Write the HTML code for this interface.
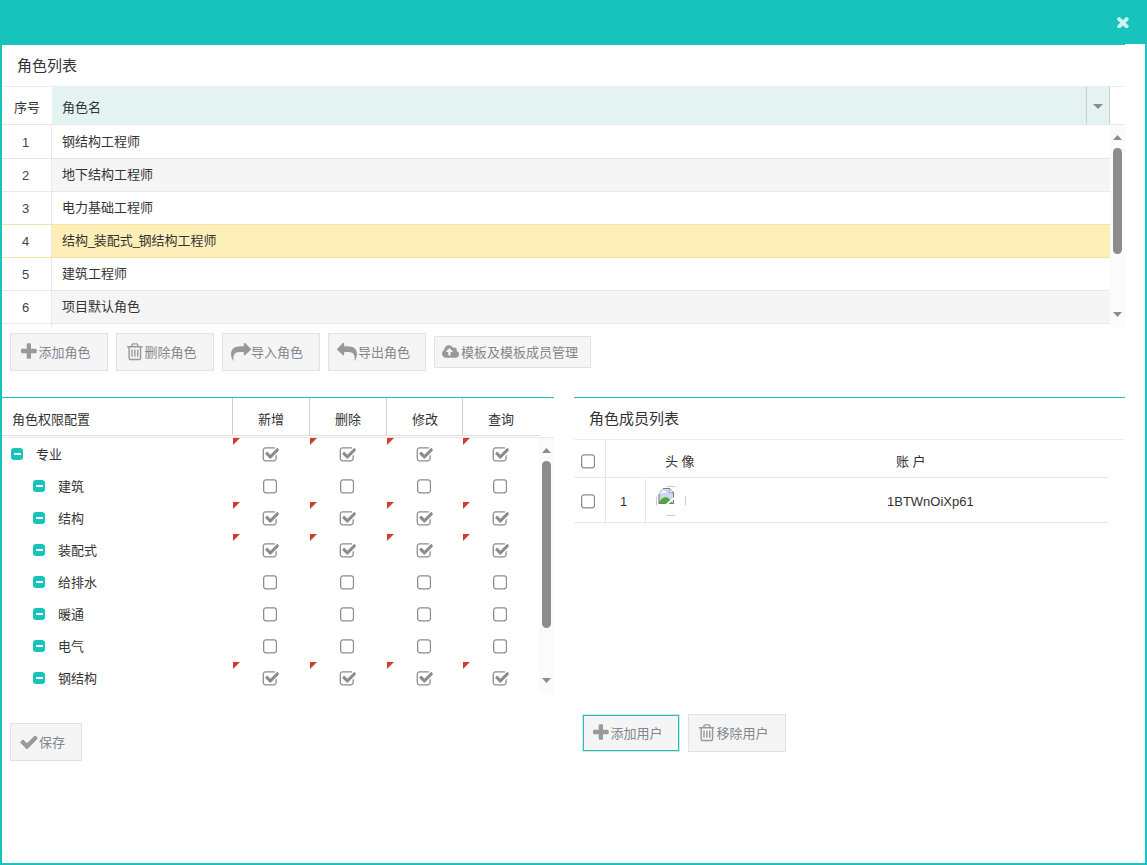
<!DOCTYPE html>
<html lang="zh-CN">
<head>
<meta charset="utf-8">
<title>角色列表</title>
<style>
*{box-sizing:border-box;margin:0;padding:0}
html,body{width:1147px;height:865px;overflow:hidden;background:#fff}
body{position:relative;font-family:"Liberation Sans","Noto Sans CJK SC",sans-serif;font-size:13px;color:#333}
.abs{position:absolute}
.teal{background:#18c3bb}
.t{position:absolute;white-space:nowrap;line-height:20px;height:20px;margin-top:1px}
.t15{font-size:15px}
.hl{position:absolute;height:1px}
.vl{position:absolute;width:1px}
/* role grid */
.row{position:absolute;left:2px;width:1108px;height:33px;border-bottom:1px solid #e8e8e8}
.row .n{position:absolute;left:0;top:0;width:50px;height:32px;line-height:34px;color:#444;text-align:center;padding-right:2px;background:#fff;border-right:1px solid #e8e8e8;width:50px}
.row .c{position:absolute;left:60px;top:0;height:32px;line-height:32px;white-space:nowrap}
.us{letter-spacing:-1.5px}
.row.alt{background:#f5f5f5}
.row.sel{background:#feefb9;border-bottom-color:#f5e3a4}
.row.presel{border-bottom-color:#f5e3a4}
/* buttons */
.btn{position:absolute;height:38px;background:#f5f5f5;border:1px solid #e2e2e2;color:#82878f;font-size:13px;line-height:36px;white-space:nowrap}
.btn svg{position:absolute}
.btn span{position:absolute;top:1px}
/* checkboxes */
.cb{position:absolute;width:15px;height:15px;border:1.5px solid #8e8e8e;border-radius:3.5px;background:#fff}
.cb.on svg{position:absolute;left:1px;top:-1px}
.tri{position:absolute;width:0;height:0;border-top:7px solid #d33b2d;border-right:7px solid transparent}
.ti{position:absolute;width:12px;height:12px;border-radius:3px;background:#18c3bb}
.ti:after{content:"";position:absolute;left:2.5px;top:5px;width:7px;height:2px;background:#fff}
</style>
</head>
<body>
<!-- window chrome -->
<div class="abs teal" style="left:0;top:0;width:1147px;height:44px"></div>
<div class="abs teal" style="left:0;top:44px;width:1125px;height:1px"></div>
<div class="abs teal" style="left:0;top:0;width:2px;height:865px"></div>
<div class="abs teal" style="left:1145px;top:0;width:2px;height:865px"></div>
<div class="abs teal" style="left:0;top:863px;width:1147px;height:2px"></div>
<svg class="abs" style="left:1117.200px;top:16.900px" width="11.8" height="11.6" viewBox="302 366 1188 1188" preserveAspectRatio="none"><path fill="#fff" fill-opacity=".8" d="M1490 1322q0 40-28 68l-136 136q-28 28-68 28t-68-28l-294-294-294 294q-28 28-68 28t-68-28l-136-136q-28-28-28-68t28-68l294-294-294-294q-28-28-28-68t28-68l136-136q28-28 68-28t68 28l294 294 294-294q28-28 68-28t68 28l136 136q28 28 28 68t-28 68l-294 294 294 294q28 28 28 68z"/></svg>

<!-- role list -->
<div class="t t15" style="left:17px;top:55px">角色列表</div>
<div class="hl" style="left:2px;top:86px;width:1123px;background:#e9edf5"></div>
<div class="abs" style="left:52px;top:87px;width:1058px;height:37px;background:#e4f2f2"></div>
<div class="hl" style="left:2px;top:124px;width:1123px;background:#e6e6e6"></div>
<div class="t" style="left:14px;top:97px">序号</div>
<div class="t" style="left:62px;top:97px">角色名</div>
<div class="vl" style="left:1086px;top:87px;height:37px;background:#c9cfcf"></div>
<div class="vl" style="left:1109px;top:87px;height:37px;background:#c9cfcf"></div>
<svg class="abs" style="left:1092px;top:103px" width="12" height="7" viewBox="0 0 12 7"><path d="M1 1h10L6 6z" fill="#8c8c8c"/></svg>

<div id="rows"></div>
<div class="row" style="top:126px"><div class="n">1</div><div class="c">钢结构工程师</div></div>
<div class="row alt" style="top:159px"><div class="n">2</div><div class="c">地下结构工程师</div></div>
<div class="row presel" style="top:192px"><div class="n">3</div><div class="c">电力基础工程师</div></div>
<div class="row sel" style="top:225px"><div class="n">4</div><div class="c">结构<span class="us">_</span>装配式<span class="us">_</span>钢结构工程师</div></div>
<div class="row" style="top:258px"><div class="n">5</div><div class="c">建筑工程师</div></div>
<div class="row alt" style="top:291px"><div class="n">6</div><div class="c">项目默认角色</div></div>
<div class="vl" style="left:51px;top:324px;height:3px;background:#e8e8e8"></div>

<!-- role grid scrollbar -->
<div class="abs" style="left:1110px;top:125px;width:15px;height:202px;background:#fbfbfb"></div>
<svg class="abs" style="left:1113px;top:135px" width="9" height="5" viewBox="0 0 9 5"><path d="M0 5h9L4.500 0z" fill="#8c8c8c"/></svg>
<svg class="abs" style="left:1113px;top:312px" width="9" height="5" viewBox="0 0 9 5"><path d="M0 0h9L4.500 5z" fill="#8c8c8c"/></svg>
<div class="abs" style="left:1113px;top:148px;width:9px;height:106px;border-radius:4.5px;background:#8c8c8c"></div>

<!-- SECTION:BUTTONS -->
<div class="btn" style="left:10px;top:333px;width:98px;height:38px;line-height:36px;"><svg class="abs" style="left:10.2px;top:7px" width="15.71" height="20" viewBox="0 0 1408 1792"><path fill="#999" d="M1408 800v192q0 40-28 68t-68 28h-416v416q0 40-28 68t-68 28h-192q-40 0-68-28t-28-68v-416h-416q-40 0-68-28t-28-68v-192q0-40 28-68t68-28h416v-416q0-40 28-68t68-28h192q40 0 68 28t28 68v416h416q40 0 68 28t28 68z"/></svg><span style="left:27.5px">添加角色</span></div>
<div class="btn" style="left:116px;top:333px;width:98px;height:38px;line-height:36px;"><svg class="abs" style="left:10px;top:7px" width="15.71" height="20" viewBox="0 0 1408 1792"><path fill="#999" d="M512 800v576q0 14-9 23t-23 9h-64q-14 0-23-9t-9-23v-576q0-14 9-23t23-9h64q14 0 23 9t9 23zM768 800v576q0 14-9 23t-23 9h-64q-14 0-23-9t-9-23v-576q0-14 9-23t23-9h64q14 0 23 9t9 23zM1024 800v576q0 14-9 23t-23 9h-64q-14 0-23-9t-9-23v-576q0-14 9-23t23-9h64q14 0 23 9t9 23zM1152 1524v-948h-896v948q0 22 7 40.500t14.500 27 10.500 8.500h832q3 0 10.500-8.500t14.500-27 7-40.500zM480 448h448l-48-117q-7-9-17-11h-317q-10 2-17 11zM1408 480v64q0 14-9 23t-23 9h-96v948q0 83-47 143.500t-113 60.500h-832q-66 0-113-58.500t-47-141.500v-952h-96q-14 0-23-9t-9-23v-64q0-14 9-23t23-9h309l70-167q15-37 54-63t79-26h320q40 0 79 26t54 63l70 167h309q14 0 23 9t9 23z"/></svg><span style="left:27.5px">删除角色</span></div>
<div class="btn" style="left:222px;top:333px;width:98px;height:38px;line-height:36px;"><svg class="abs" style="left:8px;top:8px" width="20.00" height="20" viewBox="0 0 1792 1792"><path fill="#999" d="M1792 640q0 26-19 45l-512 512q-19 19-45 19t-45-19-19-45v-256h-224q-98 0-175.500 6t-154 21.500-133 42.500-105.500 69.500-80 101-48.500 138.500-17.500 181q0 55 5 123 0 6 2.500 23.500t2.500 26.500q0 15-8.500 25t-23.500 10q-16 0-28-17-7-9-13-22t-13.500-30-10.500-24q-127-285-127-451 0-199 53-333 162-403 875-403h224v-256q0-26 19-45t45-19 45 19l512 512q19 19 19 45z"/></svg><span style="left:28px">导入角色</span></div>
<div class="btn" style="left:328px;top:333px;width:98px;height:38px;line-height:36px;"><svg class="abs" style="left:8px;top:8px" width="20.00" height="20" viewBox="0 0 1792 1792"><path fill="#999" d="M1792 1120q0 166-127 451-3 7-10.500 24t-13.500 30-13 22q-12 17-28 17-15 0-23.500-10t-8.500-25q0-9 2.500-26.500t2.500-23.500q5-68 5-123 0-101-17.500-181t-48.500-138.500-80-101-105.500-69.500-133-42.500-154-21.500-175.500-6h-224v256q0 26-19 45t-45 19-45-19l-512-512q-19-19-19-45t19-45l512-512q19-19 45-19t45 19 19 45v256h224q713 0 875 403 53 134 53 333z"/></svg><span style="left:29px">导出角色</span></div>
<div class="btn" style="left:434px;top:336px;width:157px;height:32px;line-height:30px;"><svg class="abs" style="left:6.8px;top:7px" width="17.14" height="16" viewBox="0 0 1920 1792"><path fill="#999" d="M1216 864q0-14-9-23l-352-352q-9-9-23-9t-23 9l-351 351q-10 12-10 24 0 14 9 23t23 9h224v352q0 13 9.500 22.500t22.500 9.500h192q13 0 22.500-9.500t9.500-22.500v-352h224q13 0 22.500-9.500t9.500-22.500zM1920 1152q0 159-112.500 271.500t-271.500 112.500h-1088q-185 0-316.500-131.500t-131.500-316.500q0-130 70-240t188-165q-2-30-2-43 0-212 150-362t362-150q156 0 285.500 87t188.500 231q71-62 166-62 106 0 181 75t75 181q0 76-41 138 130 31 213.500 135.500t83.500 238.500z"/></svg><span style="left:26px">模板及模板成员管理</span></div>
<!-- SECTION:LEFT -->
<svg width="0" height="0" style="position:absolute"><defs><symbol id="csq" viewBox="0 0 1664 1792"><path d="M1472 930v318q0 119-84.500 203.500t-203.500 84.500h-832q-119 0-203.500-84.500t-84.500-203.500v-832q0-119 84.500-203.500t203.500-84.500h832q63 0 117 25 15 7 18 23 3 17-9 29l-49 49q-10 10-23 10-3 0-9-2-23-6-45-6h-832q-66 0-113 47t-47 113v832q0 66 47 113t113 47h832q66 0 113-47t47-113v-254q0-13 9-22l64-64q10-10 23-10 6 0 12 3 20 8 20 29zM1703 441l-814 814q-24 24-57 24t-57-24l-430-430q-24-24-24-57t24-57l110-110q24-24 57-24t57 24l263 263 647-647q24-24 57-24t57 24l110 110q24 24 24 57t-24 57z"/></symbol><symbol id="sq" viewBox="0 0 1408 1792"><path d="M1120 256h-832q-66 0-113 47t-47 113v832q0 66 47 113t113 47h832q66 0 113-47t47-113v-832q0-66-47-113t-113-47zM1408 416v832q0 119-84.500 203.500t-203.500 84.500h-832q-119 0-203.500-84.500t-84.500-203.500v-832q0-119 84.500-203.500t203.500-84.500h832q119 0 203.500 84.500t84.500 203.500z"/></symbol></defs></svg>

<div class="hl teal" style="left:2px;top:397px;width:552px"></div>
<div class="t" style="left:12px;top:409px">角色权限配置</div>
<div class="vl" style="left:232px;top:398px;height:38px;background:#cfcfcf"></div>
<div class="t" style="left:233px;top:409px;width:76px;text-align:center">新增</div>
<div class="vl" style="left:309px;top:398px;height:38px;background:#cfcfcf"></div>
<div class="t" style="left:310px;top:409px;width:76px;text-align:center">删除</div>
<div class="vl" style="left:386px;top:398px;height:38px;background:#cfcfcf"></div>
<div class="t" style="left:387px;top:409px;width:76px;text-align:center">修改</div>
<div class="vl" style="left:462px;top:398px;height:38px;background:#cfcfcf"></div>
<div class="t" style="left:463px;top:409px;width:76px;text-align:center">查询</div>
<div class="hl" style="left:2px;top:435px;width:538px;background:#dedede"></div>
<div class="hl" style="left:2px;top:437px;width:552px;background:#e8e8e8"></div>
<div class="ti" style="left:11px;top:448px"></div><div class="t" style="left:36px;top:444px">专业</div>
<div class="tri" style="left:233px;top:438px"></div>
<svg class="abs" style="left:262.4px;top:446px;fill:#8c8c8c" width="16.71" height="18"><use href="#csq"/></svg>
<div class="tri" style="left:310px;top:438px"></div>
<svg class="abs" style="left:339.4px;top:446px;fill:#8c8c8c" width="16.71" height="18"><use href="#csq"/></svg>
<div class="tri" style="left:387px;top:438px"></div>
<svg class="abs" style="left:416.4px;top:446px;fill:#8c8c8c" width="16.71" height="18"><use href="#csq"/></svg>
<div class="tri" style="left:463px;top:438px"></div>
<svg class="abs" style="left:492.4px;top:446px;fill:#8c8c8c" width="16.71" height="18"><use href="#csq"/></svg>
<div class="ti" style="left:33px;top:480px"></div><div class="t" style="left:58px;top:476px">建筑</div>
<svg class="abs" style="left:263px;top:478px;fill:#8c8c8c" width="14.14" height="18"><use href="#sq"/></svg>
<svg class="abs" style="left:340px;top:478px;fill:#8c8c8c" width="14.14" height="18"><use href="#sq"/></svg>
<svg class="abs" style="left:417px;top:478px;fill:#8c8c8c" width="14.14" height="18"><use href="#sq"/></svg>
<svg class="abs" style="left:493px;top:478px;fill:#8c8c8c" width="14.14" height="18"><use href="#sq"/></svg>
<div class="ti" style="left:33px;top:512px"></div><div class="t" style="left:58px;top:508px">结构</div>
<div class="tri" style="left:233px;top:502px"></div>
<svg class="abs" style="left:262.4px;top:510px;fill:#8c8c8c" width="16.71" height="18"><use href="#csq"/></svg>
<div class="tri" style="left:310px;top:502px"></div>
<svg class="abs" style="left:339.4px;top:510px;fill:#8c8c8c" width="16.71" height="18"><use href="#csq"/></svg>
<div class="tri" style="left:387px;top:502px"></div>
<svg class="abs" style="left:416.4px;top:510px;fill:#8c8c8c" width="16.71" height="18"><use href="#csq"/></svg>
<div class="tri" style="left:463px;top:502px"></div>
<svg class="abs" style="left:492.4px;top:510px;fill:#8c8c8c" width="16.71" height="18"><use href="#csq"/></svg>
<div class="ti" style="left:33px;top:544px"></div><div class="t" style="left:58px;top:540px">装配式</div>
<div class="tri" style="left:233px;top:534px"></div>
<svg class="abs" style="left:262.4px;top:542px;fill:#8c8c8c" width="16.71" height="18"><use href="#csq"/></svg>
<div class="tri" style="left:310px;top:534px"></div>
<svg class="abs" style="left:339.4px;top:542px;fill:#8c8c8c" width="16.71" height="18"><use href="#csq"/></svg>
<div class="tri" style="left:387px;top:534px"></div>
<svg class="abs" style="left:416.4px;top:542px;fill:#8c8c8c" width="16.71" height="18"><use href="#csq"/></svg>
<div class="tri" style="left:463px;top:534px"></div>
<svg class="abs" style="left:492.4px;top:542px;fill:#8c8c8c" width="16.71" height="18"><use href="#csq"/></svg>
<div class="ti" style="left:33px;top:576px"></div><div class="t" style="left:58px;top:572px">给排水</div>
<svg class="abs" style="left:263px;top:574px;fill:#8c8c8c" width="14.14" height="18"><use href="#sq"/></svg>
<svg class="abs" style="left:340px;top:574px;fill:#8c8c8c" width="14.14" height="18"><use href="#sq"/></svg>
<svg class="abs" style="left:417px;top:574px;fill:#8c8c8c" width="14.14" height="18"><use href="#sq"/></svg>
<svg class="abs" style="left:493px;top:574px;fill:#8c8c8c" width="14.14" height="18"><use href="#sq"/></svg>
<div class="ti" style="left:33px;top:608px"></div><div class="t" style="left:58px;top:604px">暖通</div>
<svg class="abs" style="left:263px;top:606px;fill:#8c8c8c" width="14.14" height="18"><use href="#sq"/></svg>
<svg class="abs" style="left:340px;top:606px;fill:#8c8c8c" width="14.14" height="18"><use href="#sq"/></svg>
<svg class="abs" style="left:417px;top:606px;fill:#8c8c8c" width="14.14" height="18"><use href="#sq"/></svg>
<svg class="abs" style="left:493px;top:606px;fill:#8c8c8c" width="14.14" height="18"><use href="#sq"/></svg>
<div class="ti" style="left:33px;top:640px"></div><div class="t" style="left:58px;top:636px">电气</div>
<svg class="abs" style="left:263px;top:638px;fill:#8c8c8c" width="14.14" height="18"><use href="#sq"/></svg>
<svg class="abs" style="left:340px;top:638px;fill:#8c8c8c" width="14.14" height="18"><use href="#sq"/></svg>
<svg class="abs" style="left:417px;top:638px;fill:#8c8c8c" width="14.14" height="18"><use href="#sq"/></svg>
<svg class="abs" style="left:493px;top:638px;fill:#8c8c8c" width="14.14" height="18"><use href="#sq"/></svg>
<div class="ti" style="left:33px;top:672px"></div><div class="t" style="left:58px;top:668px">钢结构</div>
<div class="tri" style="left:233px;top:662px"></div>
<svg class="abs" style="left:262.4px;top:670px;fill:#8c8c8c" width="16.71" height="18"><use href="#csq"/></svg>
<div class="tri" style="left:310px;top:662px"></div>
<svg class="abs" style="left:339.4px;top:670px;fill:#8c8c8c" width="16.71" height="18"><use href="#csq"/></svg>
<div class="tri" style="left:387px;top:662px"></div>
<svg class="abs" style="left:416.4px;top:670px;fill:#8c8c8c" width="16.71" height="18"><use href="#csq"/></svg>
<div class="tri" style="left:463px;top:662px"></div>
<svg class="abs" style="left:492.4px;top:670px;fill:#8c8c8c" width="16.71" height="18"><use href="#csq"/></svg>
<div class="abs" style="left:539px;top:438px;width:15px;height:255px;background:#fbfbfb"></div>
<svg class="abs" style="left:542px;top:448px" width="9" height="5" viewBox="0 0 9 5"><path d="M0 5h9L4.500 0z" fill="#8c8c8c"/></svg>
<svg class="abs" style="left:542px;top:678px" width="9" height="5" viewBox="0 0 9 5"><path d="M0 0h9L4.500 5z" fill="#8c8c8c"/></svg>
<div class="abs" style="left:542px;top:461px;width:9px;height:167px;border-radius:4.5px;background:#8c8c8c"></div>
<div class="btn" style="left:10px;top:723px;width:72px;height:38px;line-height:36px;"><svg class="abs" style="left:8px;top:8px" width="20.00" height="20" viewBox="0 0 1792 1792"><path fill="#999" d="M1671 566q0 40-28 68l-724 724-136 136q-28 28-68 28t-68-28l-136-136-362-362q-28-28-28-68t28-68l136-136q28-28 68-28t68 28l294 295 656-657q28-28 68-28t68 28l136 136q28 28 28 68z"/></svg><span style="left:28px">保存</span></div>
<!-- SECTION:RIGHT -->
<div class="hl teal" style="left:574px;top:397px;width:551px"></div>
<div class="t t15" style="left:589px;top:408px">角色成员列表</div>
<div class="hl" style="left:574px;top:439px;width:551px;background:#e9edf5"></div>
<div class="vl" style="left:605px;top:440px;height:82px;background:#e6e6e6"></div>
<div class="hl" style="left:574px;top:477px;width:534px;background:#e6e6e6"></div>
<div class="vl" style="left:645px;top:479px;height:43px;background:#e6e6e6"></div>
<div class="hl" style="left:574px;top:522px;width:534px;background:#e6e6e6"></div>
<svg class="abs" style="left:581px;top:453px;fill:#8c8c8c" width="14.14" height="18"><use href="#sq"/></svg>
<svg class="abs" style="left:581px;top:493px;fill:#8c8c8c" width="14.14" height="18"><use href="#sq"/></svg>
<div class="t" style="left:665px;top:451px;word-spacing:0">头 像</div>
<div class="t" style="left:896px;top:451px">账 户</div>
<div class="t" style="left:606px;top:491px;width:39px;text-align:center;padding-right:4px">1</div>
<div class="t" style="left:887px;top:491px">1BTWnOiXp61</div>
<svg class="abs" style="left:655px;top:485px" width="32" height="32" viewBox="0 0 32 32">
<g fill="none" stroke="#c8c8c8" stroke-width="1"><path d="M11.5 1.7Q16 .9 20.500 1.700"/><path d="M11.500 30.300Q16 31.100 20.500 30.300"/><path d="M1.700 11.500Q.9 16 1.700 20.500"/><path d="M30.300 11.500Q31.100 16 30.300 20.500"/></g>
<g transform="translate(3,3)">
<path d="M1.500 2.500L5 .5h6.500l4 4v11h-15z" fill="#c9d9f3"/>
<path d="M4.500 3.600c.8-1.600 2.600-1.300 3 0 1 0 1.200 1.300 .3 1.500h-3.600c-.9-.2-.7-1.500 .3-1.500z" fill="#fff"/>
<path d="M1 15.500c1.500-5 5-7 8-6 2 .8 4 3 5.500 6z" fill="#4ea832"/>
<path d="M1 6v9.500h14.500V4.500h-4v-4H5" stroke="#7a7a7a" stroke-width="1.100" fill="none"/>
<path d="M11.500 .5l4 4" stroke="#7a7a7a" stroke-width="1" fill="none"/>
<path d="M11.500 .8v3.700h3.700z" fill="#f4f4f4"/>
<path d="M7 16.500L16.500 8.500V11L10 16.500z" fill="#fff"/>
</g></svg>
<div class="btn" style="left:582px;top:714px;width:98px;height:38px;line-height:36px;box-shadow:inset 0 0 0 1px #18c3bb;"><svg class="abs" style="left:10px;top:7px" width="15.71" height="20" viewBox="0 0 1408 1792"><path fill="#999" d="M1408 800v192q0 40-28 68t-68 28h-416v416q0 40-28 68t-68 28h-192q-40 0-68-28t-28-68v-416h-416q-40 0-68-28t-28-68v-192q0-40 28-68t68-28h416v-416q0-40 28-68t68-28h192q40 0 68 28t28 68v416h416q40 0 68 28t28 68z"/></svg><span style="left:27.5px">添加用户</span></div>
<div class="btn" style="left:688px;top:714px;width:98px;height:38px;line-height:36px;"><svg class="abs" style="left:9.5px;top:7px" width="15.71" height="20" viewBox="0 0 1408 1792"><path fill="#999" d="M512 800v576q0 14-9 23t-23 9h-64q-14 0-23-9t-9-23v-576q0-14 9-23t23-9h64q14 0 23 9t9 23zM768 800v576q0 14-9 23t-23 9h-64q-14 0-23-9t-9-23v-576q0-14 9-23t23-9h64q14 0 23 9t9 23zM1024 800v576q0 14-9 23t-23 9h-64q-14 0-23-9t-9-23v-576q0-14 9-23t23-9h64q14 0 23 9t9 23zM1152 1524v-948h-896v948q0 22 7 40.500t14.500 27 10.500 8.500h832q3 0 10.500-8.500t14.500-27 7-40.500zM480 448h448l-48-117q-7-9-17-11h-317q-10 2-17 11zM1408 480v64q0 14-9 23t-23 9h-96v948q0 83-47 143.500t-113 60.500h-832q-66 0-113-58.500t-47-141.500v-952h-96q-14 0-23-9t-9-23v-64q0-14 9-23t23-9h309l70-167q15-37 54-63t79-26h320q40 0 79 26t54 63l70 167h309q14 0 23 9t9 23z"/></svg><span style="left:27.5px">移除用户</span></div>
</body>
</html>
